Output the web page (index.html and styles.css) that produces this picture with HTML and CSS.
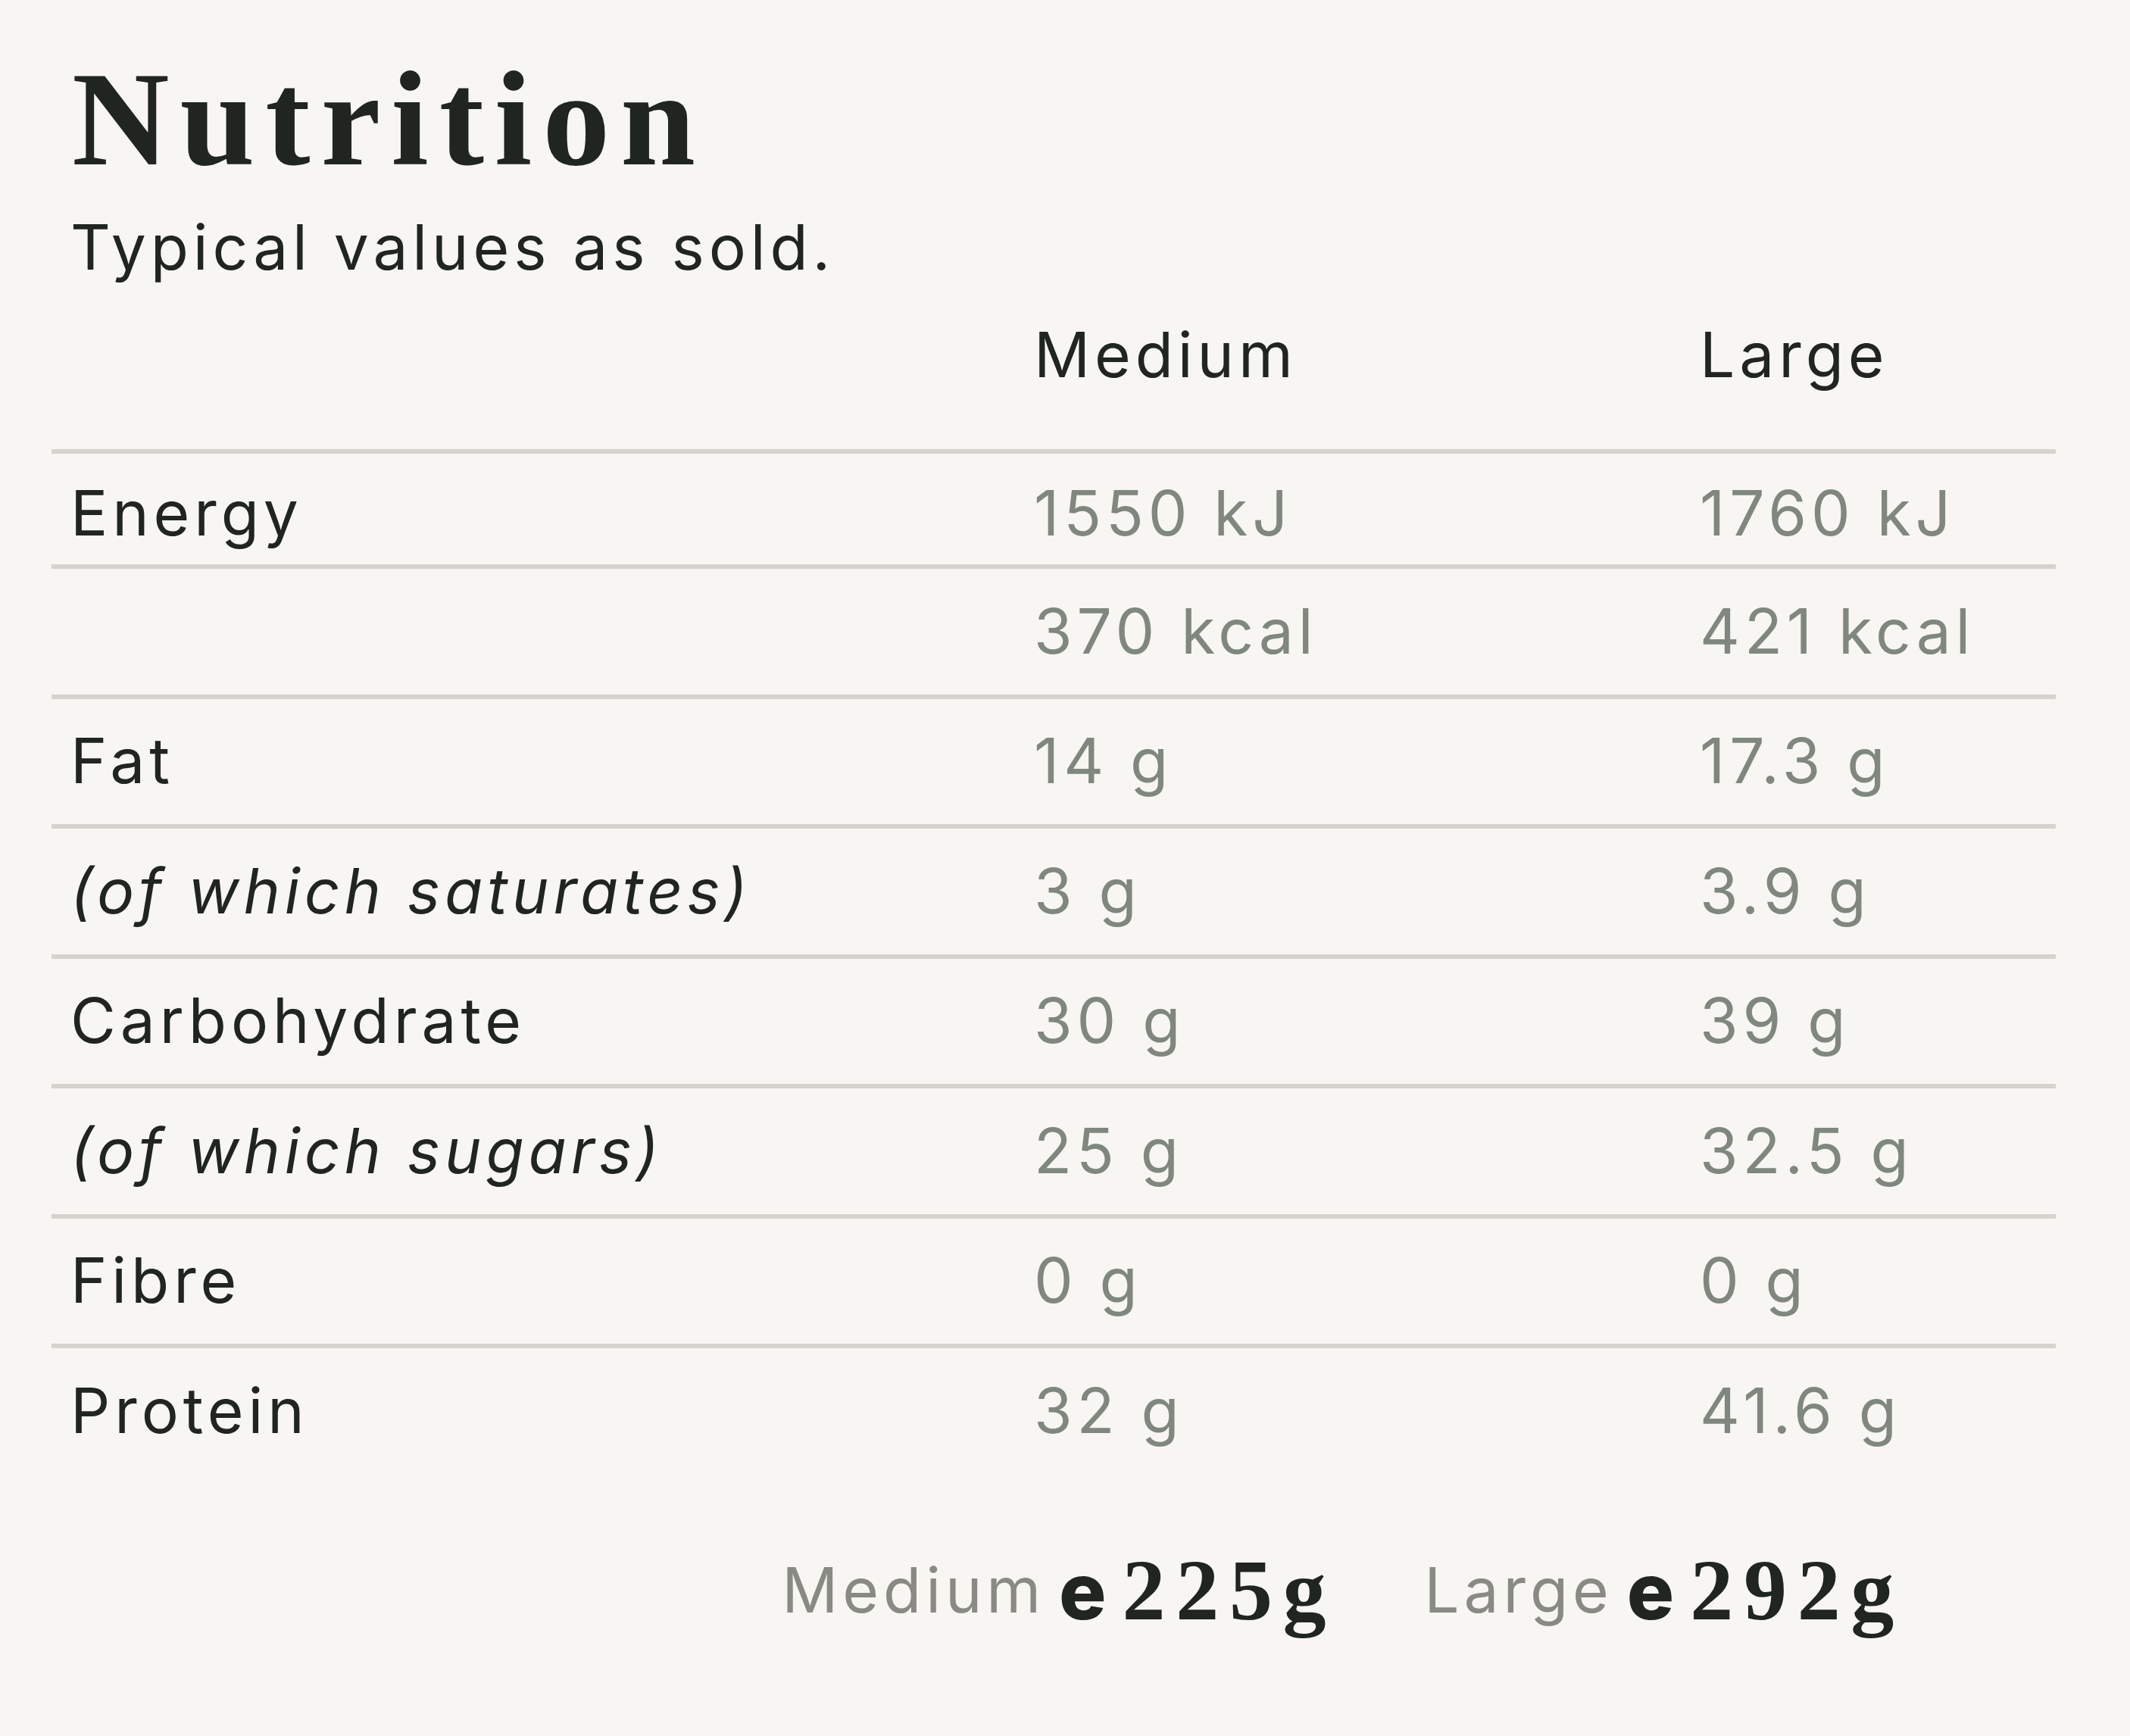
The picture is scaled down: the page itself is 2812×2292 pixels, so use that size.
FILE: index.html
```html
<!DOCTYPE html>
<html lang="en">
<head>
<meta charset="utf-8">
<title>Nutrition</title>
<link rel="stylesheet" href="styles.css">
</head>
<body>
<main class="panel">
  <h1 class="title">Nutrition</h1>
  <p class="subtitle">Typical values as sold.</p>
  <div class="table">
    <div class="row head"><span></span><span class="col">Medium</span><span class="col">Large</span></div>
    <div class="row first"><span class="label">Energy</span><span class="val">1550 kJ</span><span class="val">1760 kJ</span></div>
    <div class="row"><span class="label"></span><span class="val">370 kcal</span><span class="val">421 kcal</span></div>
    <div class="row"><span class="label">Fat</span><span class="val">14 g</span><span class="val">17.3 g</span></div>
    <div class="row"><span class="label sub">(of which saturates)</span><span class="val">3 g</span><span class="val">3.9 g</span></div>
    <div class="row"><span class="label">Carbohydrate</span><span class="val">30 g</span><span class="val">39 g</span></div>
    <div class="row"><span class="label sub">(of which sugars)</span><span class="val">25 g</span><span class="val">32.5 g</span></div>
    <div class="row"><span class="label">Fibre</span><span class="val">0 g</span><span class="val">0 g</span></div>
    <div class="row"><span class="label">Protein</span><span class="val">32 g</span><span class="val">41.6 g</span></div>
  </div>
  <div class="weights">
    <div class="weight"><span class="w-label">Medium</span><span class="w-e">e</span><span class="w-num">225g</span></div>
    <div class="weight"><span class="w-label">Large</span><span class="w-e">e</span><span class="w-num">292g</span></div>
  </div>
</main>
</body>
</html>
```
FILE: styles.css
```css
html, body {
  margin: 0;
  padding: 0;
  background: #f7f6f2;
}
body {
  min-height: 2292px;
  font-family: Inter, "Noto Sans", sans-serif;
  color: #20251f;
}
.panel {
  margin-left: 68px;
  width: 2646px;
  padding-top: 68px;
}
.title {
  margin: 0;
  padding-left: 27px;
  font-family: "Liberation Serif", "Times New Roman", serif;
  font-weight: 700;
  font-size: 178px;
  line-height: 178px;
  letter-spacing: 0.078em;
  color: #20251f;
}
.subtitle {
  margin: 32px 0 0;
  padding-left: 25px;
  font-size: 82px;
  line-height: 98px;
  letter-spacing: 0.072em;
}
.table {
  margin-top: 44px;
}
.row {
  display: grid;
  grid-template-columns: 1272px 879px 1fr;
  padding: 33.5px 0 34px 25px;
  border-top: 6px solid #d5d3cd;
  font-size: 82px;
  line-height: 98px;
  letter-spacing: 0.072em;
}
.row.head {
  border-top: none;
  padding: 0 0 75px 25px;
}
.row.first {
  padding-top: 30px;
  padding-bottom: 18px;
}
.label {
  color: #20251f;
}
.label.sub {
  font-style: italic;
}
.val {
  color: #7f877e;
}
.col {
  color: #20251f;
}
.weights {
  display: flex;
  justify-content: flex-end;
  align-items: center;
  gap: 116px;
  height: 112px;
  margin-top: 98px;
  padding-right: 200px;
}
.weight {
  display: flex;
  align-items: center;
}
.w-label {
  font-size: 82px;
  line-height: 98px;
  letter-spacing: 0.072em;
  color: #8a8a84;
  margin-right: 18px;
}
.w-e {
  font-family: Inter, sans-serif;
  font-weight: 800;
  font-size: 104px;
  line-height: 104px;
  color: #20251f;
  margin-right: 21px;
}
.w-num {
  font-family: "Liberation Serif", "Times New Roman", serif;
  font-weight: 700;
  font-size: 114px;
  line-height: 114px;
  letter-spacing: 0.12em;
  color: #20251f;
}
```
